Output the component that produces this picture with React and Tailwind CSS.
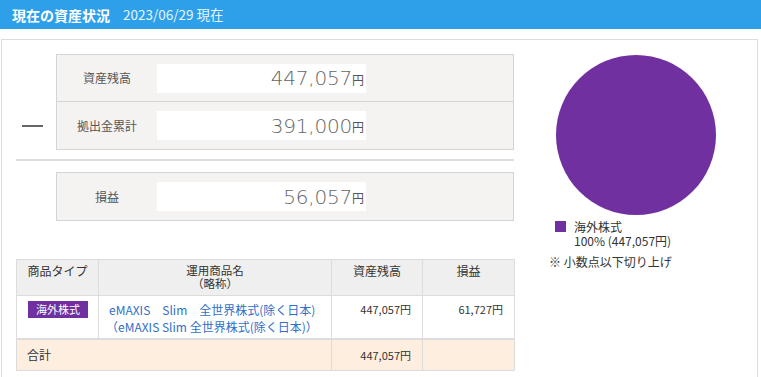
export default function App() {
  const summary = [
    { label: '資産残高', value: '447,057' },
    { label: '拠出金累計', value: '391,000' },
  ]

  return (
    <div className="w-[761px] h-[377px] overflow-hidden bg-white font-['Noto_Sans_CJK_JP',sans-serif] text-[#333]">
      <div className="h-[29px] bg-[#2ea0ea] flex items-center pl-[12px] text-white">
        <span className="text-[14px] font-bold leading-none">現在の資産状況</span>
        <span className="ml-[13px] text-[13.5px] leading-none text-[#e8f4fd]">2023/06/29 現在</span>
      </div>

      <div className="mt-[10px] ml-[1px] w-[757px] h-[400px] border border-[#dcdcdc] flex">
        {/* left column */}
        <div className="ml-[14px] w-[498px] pt-[14px]">
          <div className="flex">
            <div className="w-[40px] flex flex-col justify-end pb-[23px]">
              <div className="ml-[6px] w-[21px] h-[2px] bg-[#666]" />
            </div>
            <div className="w-[458px] border border-[#d4d4d4] bg-[#f4f3f1]">
              {summary.map((row, i) => (
                <div
                  key={row.label}
                  className={`h-[47px] flex items-center ${i === 0 ? 'border-b border-[#d4d4d4]' : ''}`}
                >
                  <div className="w-[100px] text-center text-[12px] text-[#555]">{row.label}</div>
                  <div className="w-[209px] h-[29px] bg-white flex items-center justify-end pr-[2px] text-[#555]">
                    <span className="font-['DejaVu_Sans',sans-serif] text-[20px] font-extralight tracking-[-0.2px] text-[#666]">
                      {row.value}
                    </span>
                    <span className="text-[12px] mt-[3px]">円</span>
                  </div>
                </div>
              ))}
            </div>
          </div>

          <div className="mt-[9px] h-[2px] bg-[#dedede]" />

          <div className="mt-[11px] ml-[40px] w-[458px] border border-[#d4d4d4] bg-[#f4f3f1]">
            <div className="h-[47px] flex items-center">
              <div className="w-[100px] text-center text-[12px] text-[#555]">損益</div>
              <div className="w-[209px] h-[29px] bg-white flex items-center justify-end pr-[2px] text-[#555]">
                <span className="font-['DejaVu_Sans',sans-serif] text-[20px] font-extralight tracking-[-0.2px] text-[#666]">
                  56,057
                </span>
                <span className="text-[12px] mt-[3px]">円</span>
              </div>
            </div>
          </div>

          <table className="mt-[38px] w-[498px] border-collapse border border-[#d8d8d8] text-[12px] table-fixed">
            <colgroup>
              <col className="w-[82px]" />
              <col className="w-[233px]" />
              <col className="w-[91px]" />
              <col className="w-[92px]" />
            </colgroup>
            <thead>
              <tr className="h-[36px] bg-[#efefef] align-top">
                <th className="border border-[#dcdcdc] font-normal pt-[4px] leading-[14px]">商品タイプ</th>
                <th className="border border-[#dcdcdc] font-normal pt-[4px] text-[11.5px] leading-[13px]">
                  運用商品名
                  <br />
                  （略称）
                </th>
                <th className="border border-[#dcdcdc] font-normal pt-[4px] leading-[14px]">資産残高</th>
                <th className="border border-[#dcdcdc] font-normal pt-[4px] leading-[14px]">損益</th>
              </tr>
            </thead>
            <tbody>
              <tr className="h-[43px] bg-white align-top border-b-2 border-[#dcdcdc]">
                <td className="border border-[#dcdcdc] pt-[5px]">
                  <div className="ml-[11px] w-[60px] h-[17px] bg-[#7030a0] text-white text-[11px] flex items-center justify-center">
                    海外株式
                  </div>
                </td>
                <td className="border border-[#dcdcdc] pt-[5px] pl-[10px] text-[#2f6fc8] leading-[17px]">
                  <div className="whitespace-nowrap">eMAXIS　Slim　全世界株式(除く日本)</div>
                  <div className="whitespace-nowrap -ml-[3px]">（eMAXIS Slim 全世界株式(除く日本)）</div>
                </td>
                <td className="border border-[#dcdcdc] pt-[5px] pr-[11px] text-right text-[11px] leading-[17px]">
                  447,057円
                </td>
                <td className="border border-[#dcdcdc] pt-[5px] pr-[11px] text-right text-[11px] leading-[17px]">
                  61,727円
                </td>
              </tr>
              <tr className="h-[32px] bg-[#fdeedf] border-t-2 border-[#dcdcdc]">
                <td colSpan={2} className="border border-[#dcdcdc] pl-[10px]">合計</td>
                <td className="border border-[#dcdcdc] pr-[11px] text-right text-[11px]">447,057円</td>
                <td className="border border-[#dcdcdc]" />
              </tr>
            </tbody>
          </table>
        </div>

        {/* right column */}
        <div className="ml-[41px] pt-[15px]">
          <svg width="160" height="160" viewBox="0 0 160 160" className="ml-[1px]">
            <circle cx="80" cy="80" r="80" fill="#7030a0" />
          </svg>
          <div className="mt-[6px] flex items-start">
            <div className="w-[11px] h-[11px] bg-[#7030a0]" />
            <div className="ml-[8px] text-[12px] leading-[14px] -mt-[1px]">
              <div>海外株式</div>
              <div>100% (447,057円)</div>
            </div>
          </div>
          <div className="mt-[7px] -ml-[6px] text-[12px] leading-[14px] whitespace-nowrap">
            ※ 小数点以下切り上げ
          </div>
        </div>
      </div>
    </div>
  )
}
